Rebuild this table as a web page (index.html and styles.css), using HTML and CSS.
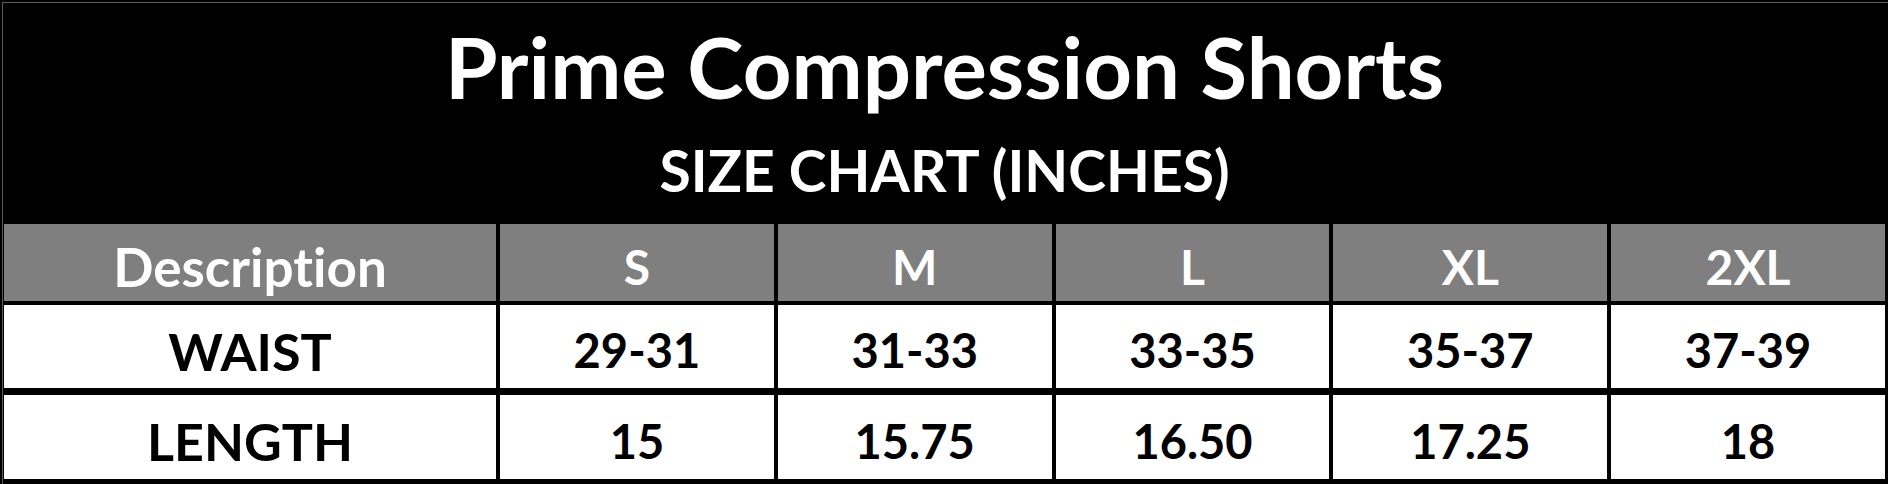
FILE: index.html
```html
<!DOCTYPE html>
<html lang="en">
<head>
<meta charset="utf-8">
<title>Prime Compression Shorts - Size Chart</title>
<link rel="stylesheet" href="styles.css">
</head>
<body>
<div class="frame">
  <div class="sheet">
    <header class="banner">
      <h1 class="title">Prime Compression Shorts</h1>
      <h2 class="subtitle">SIZE CHART (INCHES)</h2>
    </header>
    <div class="row row-head">
      <div class="cell desc">Description</div>
      <div class="cell">S</div>
      <div class="cell">M</div>
      <div class="cell">L</div>
      <div class="cell">XL</div>
      <div class="cell">2XL</div>
    </div>
    <div class="row row-data row-waist">
      <div class="cell label">WAIST</div>
      <div class="cell">29-31</div>
      <div class="cell">31-33</div>
      <div class="cell">33-35</div>
      <div class="cell">35-37</div>
      <div class="cell">37-39</div>
    </div>
    <div class="row row-data row-length">
      <div class="cell label">LENGTH</div>
      <div class="cell">15</div>
      <div class="cell">15.75</div>
      <div class="cell">16.50</div>
      <div class="cell">17.25</div>
      <div class="cell">18</div>
    </div>
  </div>
</div>
</body>
</html>
```
FILE: styles.css
```css
html, body {
  margin: 0;
  padding: 0;
  background: #ffffff;
}

body {
  font-family: Lato, "Open Sans", "Liberation Sans", sans-serif;
  font-weight: 700;
  font-variant-ligatures: none;
  font-feature-settings: "liga" 0, "dlig" 0;
}

.frame {
  width: 1888px;
  height: 484px;
  box-sizing: border-box;
  background: #000000;
  border-top: 2px solid #000000;
  border-left: 2px solid #000000;
}

.sheet {
  height: 100%;
  box-sizing: border-box;
  border-top: 1px solid #5c5c5c;
  border-left: 1px solid #5c5c5c;
  padding: 0 3px 5px 1px;
  display: flex;
  flex-direction: column;
}

.banner {
  height: 221px;
  display: flex;
  flex-direction: column;
  align-items: center;
  color: #ffffff;
}

.title {
  margin: 21px 0 0 0;
  font-size: 85px;
  line-height: 85px;
  font-weight: 700;
}

.subtitle {
  margin: 33px 0 0 0;
  font-size: 57px;
  line-height: 57px;
  font-weight: 700;
}

.row {
  display: grid;
  grid-template-columns: 492px repeat(5, 1fr);
  column-gap: 4px;
}

.cell {
  display: flex;
  align-items: center;
  justify-content: center;
  padding-top: 8px;
  box-sizing: border-box;
  line-height: 1;
}

.row-head {
  height: 77px;
  margin-bottom: 4px;
}

.row-head .cell {
  background: #7f7f7f;
  color: #ffffff;
  font-size: 48px;
}

.row-head .desc {
  font-size: 53px;
}

.row-data .cell {
  background: #ffffff;
  color: #000000;
  font-size: 47px;
}

.row-data .label {
  font-size: 52px;
}

.row-waist {
  height: 83px;
  margin-bottom: 7px;
}

.row-length {
  height: 84px;
}
```
